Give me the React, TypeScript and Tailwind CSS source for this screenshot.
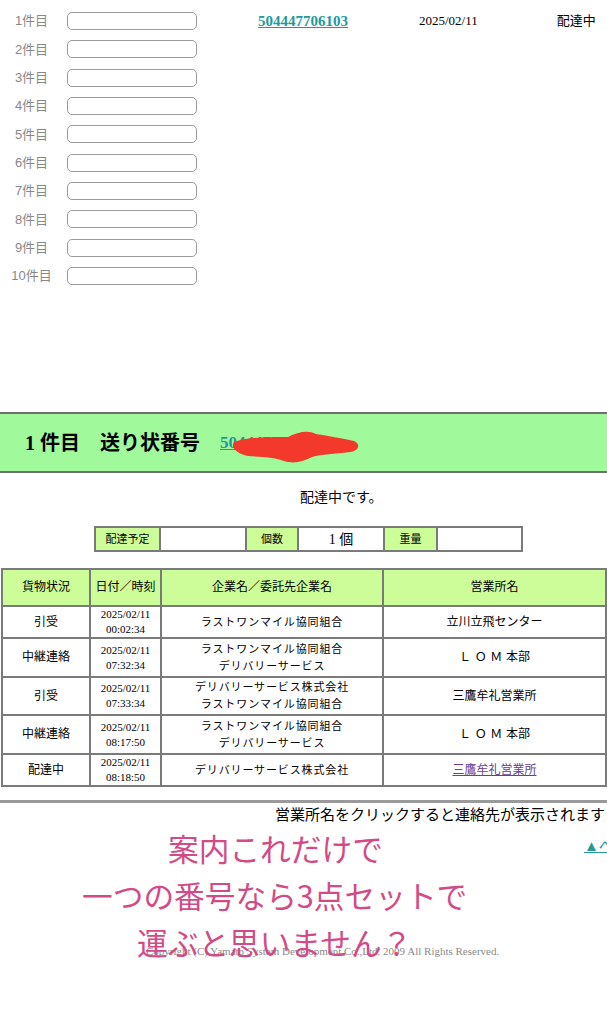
import React from "react";

const serif = "font-['Liberation_Serif','Noto_Sans_CJK_JP',serif]";

const rows = [
  { s: "引受", d: "00:02:34", c: ["ラストワンマイル協同組合"], o: "立川立飛センター", h: "h-[31px]" },
  { s: "中継連絡", d: "07:32:34", c: ["ラストワンマイル協同組合", "デリバリーサービス"], o: "LOM", h: "h-[39px]" },
  { s: "引受", d: "07:33:34", c: ["デリバリーサービス株式会社", "ラストワンマイル協同組合"], o: "三鷹牟礼営業所", h: "h-[38px]" },
  { s: "中継連絡", d: "08:17:50", c: ["ラストワンマイル協同組合", "デリバリーサービス"], o: "LOM", h: "h-[39px]" },
  { s: "配達中", d: "08:18:50", c: ["デリバリーサービス株式会社"], o: "LINK", h: "h-[30px]" },
];

export default function App() {
  const labels = ["1件目", "2件目", "3件目", "4件目", "5件目", "6件目", "7件目", "8件目", "9件目", "10件目"];
  return (
    <div className={`relative w-[607px] h-[1024px] overflow-hidden bg-white text-black ${serif}`}>
      {/* input list */}
      <div className="pt-[7px] flex flex-col">
        {labels.map((l, i) => (
          <div key={l} className="h-[28.33px] flex items-center">
            <div className="w-[63px] text-center text-[13px] text-[#888] font-['Liberation_Sans','Noto_Sans_CJK_JP',sans-serif]">{l}</div>
            <div className="ml-[4px] w-[130px] h-[18px] rounded-[5px] border border-[#999] bg-white" />
            {i === 0 && (
              <>
                <a className="ml-[61px] text-[15px] font-bold text-[#21999a] underline">504447706103</a>
                <span className="ml-[71px] text-[13px]">2025/02/11</span>
                <span className="ml-[79px] text-[13px]">配達中</span>
              </>
            )}
          </div>
        ))}
      </div>

      {/* green bar */}
      <div className="mt-[122px] h-[61px] border-t-2 border-b-2 border-[#6f6f6f] bg-[#a0f99b] flex items-center pl-[25px]">
        <span className="text-[20px] font-bold whitespace-pre">1 件目　送り状番号</span>
        <a className="ml-[20px] text-[17px] font-bold text-[#21999a] underline">504447706103</a>
      </div>

      <div className="mt-[15px] pl-[300px] text-[14px] leading-[20px]">配達中です。</div>

      {/* small table */}
      <table className="mt-[18px] ml-[94px] border-collapse text-[11px]">
        <tbody>
          <tr className="h-[24px]">
            <td className="w-[65px] border-2 border-[#7a7a7a] bg-[#ccfd99] text-center">配達予定</td>
            <td className="w-[86px] border-2 border-[#7a7a7a] bg-white"></td>
            <td className="w-[52px] border-2 border-[#7a7a7a] bg-[#ccfd99] text-center">個数</td>
            <td className="w-[86px] border-2 border-[#7a7a7a] bg-white text-center text-[14px]">1 個</td>
            <td className="w-[53px] border-2 border-[#7a7a7a] bg-[#ccfd99] text-center">重量</td>
            <td className="w-[85px] border-2 border-[#7a7a7a] bg-white"></td>
          </tr>
        </tbody>
      </table>

      {/* main table */}
      <table className="mt-[16px] ml-[1px] w-[720px] border-collapse text-[11px] leading-[15px] table-fixed">
        <colgroup>
          <col className="w-[88px]" />
          <col className="w-[71px]" />
          <col className="w-[222px]" />
          <col className="w-[223px]" />
          <col className="w-[116px]" />
        </colgroup>
        <thead>
          <tr className="h-[37px] bg-[#ccfd99] text-[12px]">
            <th className="font-normal border-2 border-[#7a7a7a]">貨物状況</th>
            <th className="font-normal border-2 border-[#7a7a7a]">日付／時刻</th>
            <th className="font-normal border-2 border-[#7a7a7a]">企業名／委託先企業名</th>
            <th className="font-normal border-2 border-[#7a7a7a]">営業所名</th>
            <th className="font-normal border-2 border-[#7a7a7a]">店コード</th>
          </tr>
        </thead>
        <tbody>
          {rows.map((r, i) => (
            <tr key={i} className={r.h}>
              <td className="border-2 border-[#7a7a7a] text-center text-[12px]">{r.s}</td>
              <td className="border-2 border-[#7a7a7a] text-center">
                <div>2025/02/11</div>
                <div>{r.d}</div>
              </td>
              <td className="border-2 border-[#7a7a7a] text-center tracking-[0.08em] leading-[17px]">
                {r.c.map((c) => (
                  <div key={c}>{c}</div>
                ))}
              </td>
              <td className="border-2 border-[#7a7a7a] text-center text-[12px]">
                {r.o === "LOM" ? (
                  <span>
                    <span className="tracking-[0.3em]">ＬＯＭ</span>本部
                  </span>
                ) : r.o === "LINK" ? (
                  <a className="text-[#6a3f96] underline">三鷹牟礼営業所</a>
                ) : (
                  r.o
                )}
              </td>
              <td className="border-2 border-[#7a7a7a]"></td>
            </tr>
          ))}
        </tbody>
      </table>

      <div className="mt-[13px] h-[3px] bg-[#9a9a9a]" />
      <div className="mt-[2px] text-right pr-[2px] text-[15px] leading-[20px] whitespace-nowrap">
        営業所名をクリックすると連絡先が表示されます
      </div>
      <div className="mt-[11px] pl-[584px] text-[15px] leading-[20px] whitespace-nowrap">
        <a className="text-[#21999a] underline">▲ページトップへ</a>
      </div>
      <div className="mt-[88px] pl-[146px] text-[11px] leading-[14px] text-[#8a8a8a] whitespace-nowrap">
        Copyright (C) Yamato System Development Co.,Ltd. 2009 All Rights Reserved.
      </div>

      {/* red scribble overlay */}
      <svg className="absolute left-[230px] top-[429px]" width="132" height="36" viewBox="0 0 132 36">
        <path
          d="M4 13 C18 8 38 8 58 8 C68 3 78 1 86 5 C98 7 112 9 124 12 C131 15 129 22 120 23 C104 25 92 25 82 28 C72 33 64 35 54 32 C44 28 32 28 18 27 C8 25 0 19 4 13 Z"
          fill="#f2392c"
        />
      </svg>

      {/* pink annotation overlay */}
      <div className="absolute inset-0 pointer-events-none font-['Noto_Sans_CJK_JP',sans-serif] text-[30.7px] leading-[36px] text-[#d24b87]">
        <div className="absolute left-[168px] top-[830px]">案内これだけで</div>
        <div className="absolute left-[82px] top-[877px]">一つの番号なら3点セットで</div>
        <div className="absolute left-[137px] top-[924px]">運ぶと思いません？</div>
      </div>
    </div>
  );
}
